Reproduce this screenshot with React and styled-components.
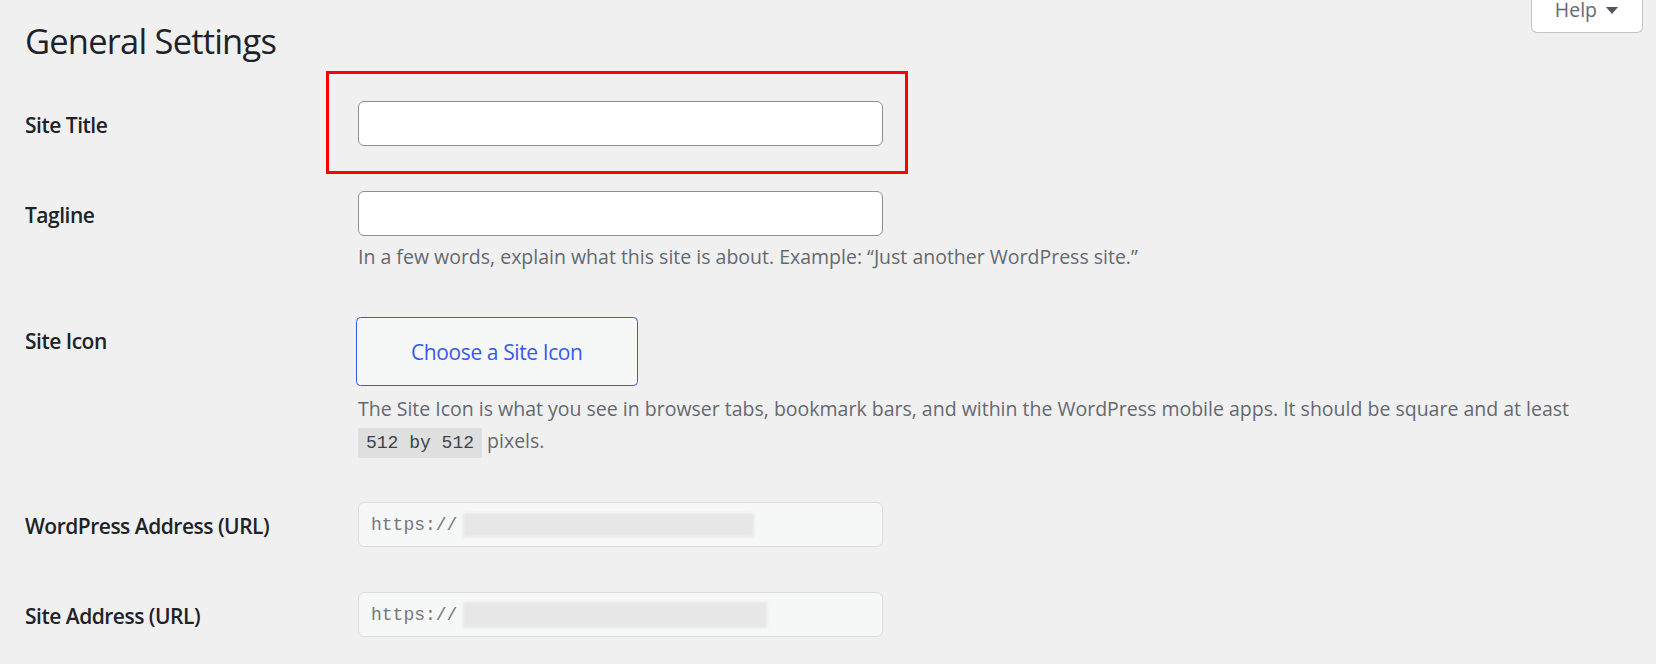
import styled, { createGlobalStyle } from "styled-components";

const GlobalStyle = createGlobalStyle`
  html, body {
    margin: 0;
    background: #f0f0f1;
  }
  body {
    font-family: "Open Sans", "Noto Sans", sans-serif;
    color: #1d2327;
  }
`;

const Page = styled.div`
  padding: 0 13px 0 25px;
`;

const Header = styled.header`
  display: flex;
  justify-content: space-between;
  align-items: flex-start;
`;

const Title = styled.h1`
  margin: 19px 0 0;
  font-size: 34.5px;
  font-weight: 400;
  line-height: 1.3;
  letter-spacing: -0.8px;
`;

const HelpTab = styled.button`
  display: flex;
  align-items: flex-start;
  gap: 9px;
  box-sizing: border-box;
  height: 33px;
  margin: 0;
  padding: 3px 24px 0 23px;
  background: #fff;
  border: 1px solid #c3c4c7;
  border-top: none;
  border-radius: 0 0 6px 6px;
  color: #646970;
  font-family: inherit;
  font-size: 19.5px;
  line-height: 14px;

  svg {
    margin-top: 4px;
  }
`;

const FormTable = styled.div`
  display: grid;
  grid-template-columns: 331px 1fr;
  margin-top: 15px;
`;

const Label = styled.div`
  padding-top: 33px;
  font-size: 21px;
  font-weight: 600;
  line-height: 1.3;
  letter-spacing: -0.5px;
`;

const Field = styled.div`
  padding: 22.5px 0;
`;

const InputWrap = styled.div`
  position: relative;
  margin-left: 2px;
  width: 525px;
`;

const TextInput = styled.input`
  display: block;
  box-sizing: border-box;
  width: 525px;
  height: 45px;
  margin: 0 0 0 ${({ $flush }) => ($flush ? "0" : "2px")};
  padding: 0 12px;
  background: #fff;
  border: 1px solid #8c8f94;
  border-radius: 6px;
  font-family: inherit;
  font-size: 21px;
`;

const Highlight = styled.div`
  position: absolute;
  top: -30px;
  left: -32px;
  width: 582px;
  height: 103px;
  box-sizing: border-box;
  border: 3px solid #ff0000;
  pointer-events: none;
`;

const Description = styled.p`
  margin: ${({ $tall }) => ($tall ? "7px" : "6px")} 0 0 2px;
  font-size: 19.5px;
  line-height: ${({ $tall }) => ($tall ? "32px" : "30px")};
  color: #646970;
  max-width: 1260px;
`;

const Code = styled.code`
  padding: 5px 8px;
  background: rgba(0, 0, 0, 0.07);
  color: #3c434a;
  font-family: "Liberation Mono", monospace;
  font-size: 18px;
  line-height: 1;
  white-space: nowrap;
`;

const UploadButton = styled.button`
  display: block;
  box-sizing: border-box;
  height: 69px;
  margin: 0;
  padding: 0 54px;
  background: #f6f7f7;
  border: 1px solid #3858e9;
  border-radius: 4.5px;
  color: #3858e9;
  font-family: inherit;
  font-size: 21px;
  letter-spacing: -0.4px;
`;

const ReadonlyBox = styled.div`
  display: flex;
  align-items: center;
  box-sizing: border-box;
  width: 525px;
  height: 45px;
  margin-left: 2px;
  padding: 0 12px;
  background: #f6f7f7;
  border: 1px solid #dcdcde;
  border-radius: 6px;
`;

const UrlText = styled.span`
  font-family: "Liberation Mono", monospace;
  font-size: 18px;
  color: #74777c;
`;

const Redacted = styled.span`
  display: inline-block;
  width: ${({ $w }) => $w}px;
  height: ${({ $h }) => $h}px;
  margin-left: 6px;
  background: #e7e7e8;
  filter: blur(1.5px);
`;

function ArrowDown() {
  return (
    <svg width="12" height="8" viewBox="0 0 12 8" aria-hidden="true">
      <polygon points="0,0 12,0 6,7" fill="#50575e" />
    </svg>
  );
}

export default function App() {
  return (
    <Page>
      <GlobalStyle />
      <Header>
        <Title>General Settings</Title>
        <HelpTab type="button">
          Help <ArrowDown />
        </HelpTab>
      </Header>

      <FormTable>
        <Label>Site Title</Label>
        <Field>
          <InputWrap>
            <TextInput type="text" $flush />
            <Highlight />
          </InputWrap>
        </Field>

        <Label>Tagline</Label>
        <Field>
          <TextInput type="text" />
          <Description>
            In a few words, explain what this site is about. Example: “Just
            another WordPress site.”
          </Description>
        </Field>

        <Label>Site Icon</Label>
        <Field>
          <UploadButton type="button">Choose a Site Icon</UploadButton>
          <Description $tall>
            The Site Icon is what you see in browser tabs, bookmark bars, and
            within the WordPress mobile apps. It should be square and at least{" "}
            <Code>512 by 512</Code> pixels.
          </Description>
        </Field>

        <Label>WordPress Address (URL)</Label>
        <Field>
          <ReadonlyBox>
            <UrlText>https://</UrlText>
            <Redacted $w={291} $h={24} />
          </ReadonlyBox>
        </Field>

        <Label>Site Address (URL)</Label>
        <Field>
          <ReadonlyBox>
            <UrlText>https://</UrlText>
            <Redacted $w={304} $h={26} />
          </ReadonlyBox>
        </Field>
      </FormTable>
    </Page>
  );
}
